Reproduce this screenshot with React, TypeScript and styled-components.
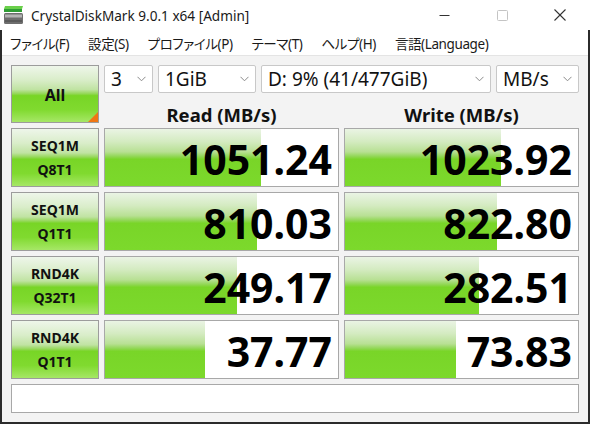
import React from "react";
import styled, { createGlobalStyle } from "styled-components";

const Global = createGlobalStyle`
  *, *::before, *::after { box-sizing: border-box; }
  html, body { margin: 0; padding: 0; background: #ffffff; }
  body { font-family: "Noto Sans", "Noto Sans CJK JP", sans-serif; }
`;

const Window = styled.div`
  width: 590px;
  height: 424px;
  display: flex;
  flex-direction: column;
  background: #ffffff;
  overflow: hidden;
`;

const TitleBar = styled.div`
  height: 30px;
  flex: none;
  display: flex;
  align-items: center;
  padding-left: 4px;
  background: #ffffff;
`;

const TitleText = styled.span`
  margin-left: 8px;
  font-size: 13.6px;
  color: #1a1a1a;
  padding-top: 1px;
`;

const Controls = styled.div`
  margin-left: auto;
  display: flex;
  height: 100%;
  padding-right: 1px;
`;

const ControlButton = styled.div`
  width: 58px;
  height: 100%;
  display: flex;
  align-items: center;
  justify-content: center;
`;

const Frame = styled.div`
  flex: 1;
  display: flex;
  flex-direction: column;
  border: 2px solid #2b2b2b;
  border-top: none;
  background: #f3f3f3;
`;

const MenuBar = styled.div`
  height: 26px;
  flex: none;
  display: flex;
  align-items: center;
  gap: 19px;
  padding-left: 8px;
  background: #ffffff;
  border-bottom: 1px solid #e4e4e4;
  font-size: 13.5px;
  letter-spacing: -0.4px;
  font-feature-settings: "palt" 1;
  color: #1a1a1a;
`;

const MenuItem = styled.span`
  white-space: nowrap;
`;

const Board = styled.div`
  display: grid;
  grid-template-columns: 88px 235px 235px;
  grid-template-rows: 28px 25px repeat(4, 59px) 29px;
  gap: 5px;
  padding: 9px 9px 8px;
`;

const tileGradient = `linear-gradient(to bottom,
  #eef6ea 0%, #d9edc9 25%, #c0e3a2 42%, #97d85c 49%,
  #78d526 53%, #80da2f 78%, #a6e766 100%)`;

const Tile = styled.div<{ $big?: boolean }>`
  position: relative;
  border: 1px solid #9c9c9c;
  background: ${tileGradient};
  display: flex;
  flex-direction: column;
  align-items: center;
  justify-content: center;
  font-weight: 700;
  font-size: ${(p) => (p.$big ? "16px" : "14px")};
  line-height: 24px;
  color: #111111;
`;

const AllTile = styled(Tile)`
  grid-column: 1;
  grid-row: 1 / span 2;
  padding-top: 2px;
`;

const Corner = styled.div`
  position: absolute;
  right: 0;
  bottom: 0;
  width: 0;
  height: 0;
  border-left: 10px solid transparent;
  border-bottom: 10px solid #f07614;
`;

const ComboRow = styled.div`
  grid-column: 2 / span 2;
  grid-row: 1;
  display: flex;
  gap: 5px;
`;

const Combo = styled.div<{ $w: number }>`
  width: ${(p) => p.$w}px;
  height: 100%;
  display: flex;
  align-items: center;
  justify-content: space-between;
  padding: 0 6px 0 6px;
  background: #ffffff;
  border: 1px solid #c8c8c8;
  border-radius: 2px;
  font-size: 19px;
  color: #111111;
  white-space: nowrap;
`;

const Header = styled.div<{ $col: number }>`
  grid-row: 2;
  grid-column: ${(p) => p.$col};
  display: flex;
  align-items: flex-end;
  justify-content: center;
  font-size: 18.5px;
  font-weight: 700;
  line-height: 0.8;
  color: #111111;
`;

const Meter = styled.div`
  position: relative;
  overflow: hidden;
  background: #ffffff;
  border: 1px solid #a8a8a8;
  display: flex;
  align-items: center;
  justify-content: flex-end;
  padding-right: 6px;
`;

const Fill = styled.div`
  position: absolute;
  left: 0;
  top: 0;
  bottom: 0;
  background: linear-gradient(to bottom,
    #eaf4e4 0%, #d4ebc1 22%, #b8e094 40%, #92d756 48%,
    #79d528 53%, #7cd92c 100%);
`;

const Value = styled.span`
  position: relative;
  font-size: 41px;
  font-weight: 700;
  line-height: 1;
  color: #000000;
  padding-top: 4px;
`;

const Comment = styled.div`
  grid-column: 1 / -1;
  background: #ffffff;
  border: 1px solid #a8a8a8;
`;

const Chevron = () => (
  <svg width="9" height="6" viewBox="0 0 9 6">
    <polyline points="0.5,0.8 4.5,4.8 8.5,0.8" fill="none" stroke="#8a8a8a" strokeWidth="1" />
  </svg>
);

const AppIcon = () => (
  <svg width="19" height="18" viewBox="0 0 19 18">
    <polygon points="1,0 19,0 18,3 0,3" fill="#6ad04a" />
    <polygon points="0,3 18,3 18,6 0,6" fill="#2f9d35" />
    <rect x="0" y="7" width="19" height="11" rx="1.5" fill="#6e6e6e" />
    <rect x="1" y="8.5" width="17" height="3" fill="#b4b4b4" />
    <rect x="1" y="14" width="17" height="2" fill="#5a5a5a" />
  </svg>
);

const MinIcon = () => (
  <svg width="11" height="11" viewBox="0 0 11 11">
    <line x1="0.5" y1="5.5" x2="10.5" y2="5.5" stroke="#333333" strokeWidth="1" />
  </svg>
);

const MaxIcon = () => (
  <svg width="11" height="11" viewBox="0 0 11 11">
    <rect x="0.5" y="0.5" width="10" height="10" rx="1" fill="none" stroke="#c4c4c4" strokeWidth="1" />
  </svg>
);

const CloseIcon = () => (
  <svg width="12" height="12" viewBox="0 0 12 12">
    <line x1="0.5" y1="0.5" x2="11.5" y2="11.5" stroke="#333333" strokeWidth="1.1" />
    <line x1="11.5" y1="0.5" x2="0.5" y2="11.5" stroke="#333333" strokeWidth="1.1" />
  </svg>
);

const menu = ["ファイル(F)", "設定(S)", "プロファイル(P)", "テーマ(T)", "ヘルプ(H)", "言語(Language)"];

const combos = [
  { w: 49, text: "3" },
  { w: 98, text: "1GiB" },
  { w: 230, text: "D: 9% (41/477GiB)" },
  { w: 83, text: "MB/s" },
];

const rows = [
  { l1: "SEQ1M", l2: "Q8T1", read: "1051.24", write: "1023.92" },
  { l1: "SEQ1M", l2: "Q1T1", read: "810.03", write: "822.80" },
  { l1: "RND4K", l2: "Q32T1", read: "249.17", write: "282.51" },
  { l1: "RND4K", l2: "Q1T1", read: "37.77", write: "73.83" },
];

const fillPct = (v: string) => {
  const n = parseFloat(v);
  const f = (Math.log10(n) + 1) / 6;
  return `${Math.max(0, Math.min(1, f)) * 100}%`;
};

const Bar = ({ value }: { value: string }) => (
  <Meter>
    <Fill style={{ width: fillPct(value) }} />
    <Value>{value}</Value>
  </Meter>
);

export default function App() {
  return (
    <>
      <Global />
      <Window>
        <TitleBar>
          <AppIcon />
          <TitleText>CrystalDiskMark 9.0.1 x64 [Admin]</TitleText>
          <Controls>
            <ControlButton><MinIcon /></ControlButton>
            <ControlButton><MaxIcon /></ControlButton>
            <ControlButton><CloseIcon /></ControlButton>
          </Controls>
        </TitleBar>
        <Frame>
          <MenuBar>
            {menu.map((m) => (
              <MenuItem key={m}>{m}</MenuItem>
            ))}
          </MenuBar>
          <Board>
            <AllTile $big>
              All
              <Corner />
            </AllTile>
            <ComboRow>
              {combos.map((c) => (
                <Combo key={c.text} $w={c.w}>
                  <span>{c.text}</span>
                  <Chevron />
                </Combo>
              ))}
            </ComboRow>
            <Header $col={2}>Read (MB/s)</Header>
            <Header $col={3}>Write (MB/s)</Header>
            {rows.map((r, i) => (
              <React.Fragment key={i}>
                <Tile>
                  <span>{r.l1}</span>
                  <span>{r.l2}</span>
                </Tile>
                <Bar value={r.read} />
                <Bar value={r.write} />
              </React.Fragment>
            ))}
            <Comment />
          </Board>
        </Frame>
      </Window>
    </>
  );
}
